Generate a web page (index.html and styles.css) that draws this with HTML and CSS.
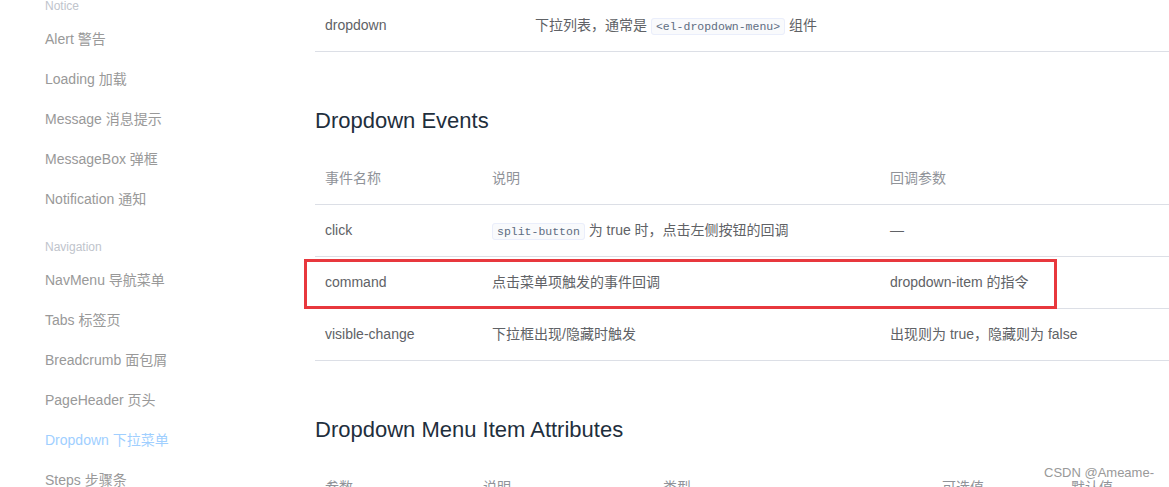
FILE: index.html
```html
<!DOCTYPE html>
<html lang="zh-CN">
<head>
<meta charset="utf-8">
<title>Dropdown</title>
<link rel="stylesheet" href="styles.css">
</head>
<body>
<div class="page">
  <aside class="side">
    <div class="group">Notice</div>
    <a class="item">Alert 警告</a>
    <a class="item">Loading 加载</a>
    <a class="item">Message 消息提示</a>
    <a class="item">MessageBox 弹框</a>
    <a class="item">Notification 通知</a>
    <div class="group group-gap">Navigation</div>
    <a class="item">NavMenu 导航菜单</a>
    <a class="item">Tabs 标签页</a>
    <a class="item">Breadcrumb 面包屑</a>
    <a class="item">PageHeader 页头</a>
    <a class="item active">Dropdown 下拉菜单</a>
    <a class="item">Steps 步骤条</a>
  </aside>
  <main class="main">
    <table class="tbl tbl-attr">
      <colgroup><col class="c-a1"><col></colgroup>
      <tbody>
        <tr><td>dropdown</td><td>下拉列表，通常是 <code>&lt;el-dropdown-menu&gt;</code> 组件</td></tr>
      </tbody>
    </table>

    <h3>Dropdown Events</h3>
    <div class="tbl-wrap">
      <table class="tbl">
        <colgroup><col class="c-e1"><col class="c-e2"><col></colgroup>
        <thead>
          <tr><th>事件名称</th><th>说明</th><th>回调参数</th></tr>
        </thead>
        <tbody>
          <tr><td>click</td><td><code>split-button</code> 为 true 时，点击左侧按钮的回调</td><td>—</td></tr>
          <tr><td>command</td><td>点击菜单项触发的事件回调</td><td>dropdown-item 的指令</td></tr>
          <tr><td>visible-change</td><td>下拉框出现/隐藏时触发</td><td>出现则为 true，隐藏则为 false</td></tr>
        </tbody>
      </table>
      <div class="mark"></div>
    </div>

    <h3>Dropdown Menu Item Attributes</h3>
    <table class="tbl">
      <colgroup><col class="c-m1"><col class="c-m2"><col class="c-m3"><col class="c-m4"><col></colgroup>
      <thead>
        <tr><th>参数</th><th>说明</th><th>类型</th><th>可选值</th><th>默认值</th></tr>
      </thead>
    </table>
  </main>
</div>
<div class="watermark">CSDN @Ameame-</div>
</body>
</html>
```

FILE: styles.css
```css
html, body {
  margin: 0;
  padding: 0;
  background: #fff;
  overflow: hidden;
  height: 487px;
}
body {
  font-family: "Liberation Sans", "Noto Sans CJK SC", sans-serif;
  font-size: 14px;
  color: #606266;
  position: relative;
}
.page {
  display: flex;
  align-items: flex-start;
}
.side {
  width: 315px;
  flex-shrink: 0;
  box-sizing: border-box;
  padding-left: 45px;
  margin-top: -7px;
  display: flex;
  flex-direction: column;
}
.group {
  font-size: 12px;
  line-height: 26px;
  color: #c0c4cc;
}
.group-gap {
  margin-top: 15px;
}
.item {
  display: block;
  line-height: 40px;
  font-size: 14px;
  color: #999;
}
.item.active {
  color: #a0cfff;
}
.main {
  width: 900px;
  flex-shrink: 0;
}
.tbl {
  width: 100%;
  border-collapse: collapse;
  table-layout: fixed;
}
.tbl th, .tbl td {
  text-align: left;
  padding: 15px 10px;
  line-height: 21px;
  border-bottom: 1px solid #dcdfe6;
  white-space: nowrap;
  font-weight: normal;
}
.tbl th {
  color: #909399;
}
.tbl td {
  color: #606266;
}
.c-a1 { width: 210px; }
.c-e1 { width: 167px; }
.c-e2 { width: 398px; }
.c-m1 { width: 158px; }
.c-m2 { width: 180px; }
.c-m3 { width: 279px; }
.c-m4 { width: 129px; }
code {
  font-family: "Liberation Mono", "DejaVu Sans Mono", monospace;
  font-size: 11.5px;
  line-height: 1;
  color: #5e6d82;
  background: #f9fafc;
  border: 1px solid #eaeefb;
  border-radius: 3px;
  padding: 1px 4px;
}
h3 {
  margin: 50px 0 14px;
  font-size: 22px;
  font-weight: 400;
  line-height: 37px;
  color: #1f2f3d;
}
.tbl-wrap {
  position: relative;
}
.mark {
  position: absolute;
  left: -11px;
  top: 106px;
  width: 753px;
  height: 50px;
  box-sizing: border-box;
  border: 3px solid #e8383d;
}
.watermark {
  position: absolute;
  right: 15px;
  top: 465px;
  font-size: 13px;
  color: #999;
  line-height: 16px;
}
```
